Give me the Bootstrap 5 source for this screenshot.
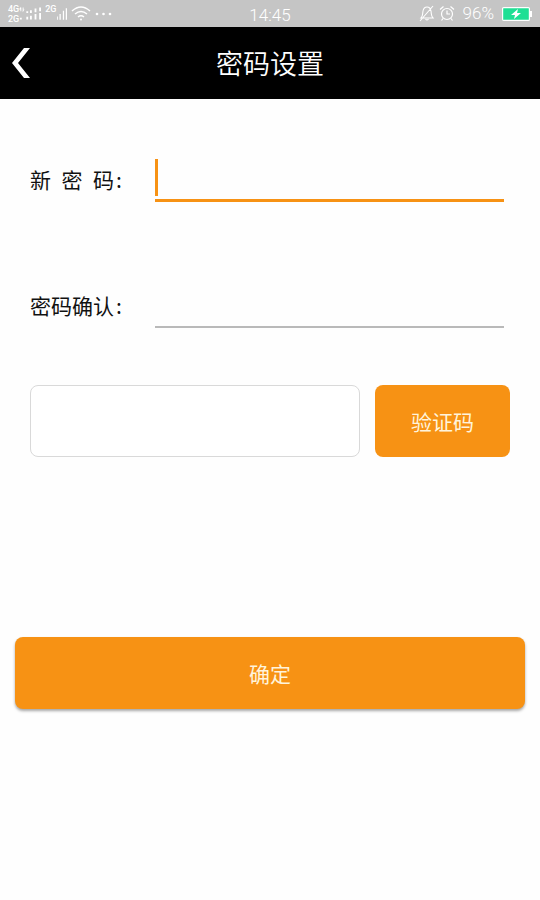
<!DOCTYPE html>
<html lang="zh-CN">
<head>
<meta charset="utf-8">
<meta name="viewport" content="width=device-width, initial-scale=1">
<title>密码设置</title>
<link rel="stylesheet" href="https://cdn.jsdelivr.net/npm/bootstrap@5.3.0/dist/css/bootstrap.min.css">
<style>
  :root { --brand: #f79214; }
  body { font-family: "Noto Sans CJK SC", sans-serif; font-size: 21px; line-height: 32px; background: #fefefe; color: #111; }
  .status-bar { background: #c5c5c5; height: 27px; font: 300 17px/27px Roboto, sans-serif; padding: 0 8px; color: #fff; }
  .status-side { flex: 1 1 0; height: 27px; }
  .sim-tag { font: 500 9px/10px Roboto, sans-serif; }
  .title-bar { background: #000; height: 72px; }
  .title-bar h1 { font-size: 27px; line-height: 40px; font-weight: 350; }
  .title-side { width: 48px; height: 72px; }
  .page-form { padding: 60px 30px 20px; }
  .field-label { width: 125px; gap: 2px; line-height: 40px; }
  .line-field { margin-right: 6px; height: 43px; border-bottom: 3px solid var(--brand); }
  .line-field input { height: 38px; outline: 0; caret-color: transparent; }
  .text-caret { width: 3px; height: 37px; background: var(--brand); }
  .line-field.idle { border-bottom: 2px solid #b9b9b9; }
  .second-row { margin-top: 83px; }
  .code-row { margin-top: 57px; gap: 15px; }
  .code-input { height: 72px; border: 1px solid #d9d9d9; border-radius: 8px; font-size: 21px; background: #fff; }
  .btn-brand { --bs-btn-color: #fff4dc; --bs-btn-bg: var(--brand); --bs-btn-hover-color: #fff; --bs-btn-hover-bg: #e98509; --bs-btn-active-color: #fff; --bs-btn-active-bg: #df7e05; --bs-btn-border-width: 0; --bs-btn-font-size: 21px; --bs-btn-line-height: 32px; --bs-btn-border-radius: 8px; height: 72px; }
  .code-btn { width: 135px; }
  .submit-row { margin: 180px -15px 0; }
  .btn.submit-btn { box-shadow: 0 2px 3px rgba(0,0,0,.35); }
</style>
</head>
<body>
<div class="status-bar d-flex align-items-center">
  <div class="status-side d-flex align-items-center">
    <div class="sim-tag"><div>4G</div><div>2G</div></div>
    <svg width="22" height="16" viewBox="0 0 24 16" fill="#fff" aria-hidden="true">
      <path d="M1.500 1h1v4h-1zM4 1h1v4H4zM0 3l2-3v3zM4 3h2L4 6z"/>
      <path d="M1 12h2v2H1zM8 11h2v3H8zM12 10h2v4h-2zM17 8h2v6h-2zM22 7h2v7h-2zM8 5h2v2H8zM12 4h2v3h-2zM17 2h2v4h-2zM22 1h2v4h-2z"/>
    </svg>
    <span class="sim-tag align-self-start pt-1 ms-1">2G</span>
    <svg width="10" height="16" viewBox="0 0 12 16" fill="#fff" aria-hidden="true"><path d="M0 11h1v4H0zM3 8h1.500v7H3zM7 4h1.500v11H7zM10.500 1H12v14h-1.500z"/></svg>
    <svg class="ms-1" width="20" height="17" viewBox="0 0 20 17" fill="none" stroke="#fff" stroke-width="1.500" aria-hidden="true">
      <path d="M1 6Q10-2 19 6M4 9q6-5 12 0M7 12q3-2.500 6 0"/><circle cx="10" cy="14.500" r="1" fill="#fff" stroke="none"/>
    </svg>
    <svg class="ms-1" width="17" height="4" viewBox="0 0 17 4" fill="#fff" aria-hidden="true"><circle cx="2" cy="2" r="1.300"/><circle cx="8.500" cy="2" r="1.300"/><circle cx="15" cy="2" r="1.300"/></svg>
  </div>
  <time class="pt-1">14:45</time>
  <div class="status-side d-flex align-items-center justify-content-end">
    <svg width="16" height="17" viewBox="0 0 16 17" fill="none" stroke="#fff" stroke-width="1.100" aria-hidden="true">
      <path d="M2 13c2-2 1.500-4 2-7 .5-2.500 2-4 4-4s3.500 1.500 4 4c.5 3 0 5 2 7zM6.500 14q1.500 2 3 0M14 1 1 16"/>
    </svg>
    <svg class="ms-1" width="16" height="17" viewBox="0 0 16 17" fill="none" stroke="#fff" stroke-width="1.200" aria-hidden="true">
      <circle cx="8" cy="9" r="5.500"/><path d="M8 5.500V9h3M1 4.500 4.500 1.500M15 4.500l-3.500-3M4 13.500l-1.500 2M12 13.500l1.500 2"/>
    </svg>
    <span class="ms-2">96%</span>
    <svg class="ms-2" width="30" height="14" viewBox="0 0 30 14" aria-hidden="true">
      <rect x=".6" y=".6" width="26.800" height="12.800" rx="1" fill="#1fdf94" stroke="#fff" stroke-width="1.200"/>
      <path d="M28 4h2v6h-2z" fill="#fff"/><path d="M16 2 9 8h4l-1 4 7-6h-4z" fill="#fff"/>
    </svg>
  </div>
</div>

<header class="title-bar d-flex align-items-center text-white">
  <button type="button" class="title-side btn border-0 rounded-0 p-0 text-start" aria-label="返回">
    <svg class="d-block ms-2" width="26" height="32" viewBox="0 0 26 32" fill="#fff" aria-hidden="true"><path d="M16 1h6L10 16l12 15h-6L4 16z"/></svg>
  </button>
  <h1 class="flex-fill text-center mb-0">密码设置</h1>
  <div class="title-side"></div>
</header>

<main>
  <form class="page-form">
    <div class="d-flex">
      <label class="field-label d-flex" for="newPassword"><span>新&ensp;密&ensp;码</span><span>:</span></label>
      <div class="line-field flex-fill d-flex">
        <span class="text-caret"></span>
        <input class="form-control border-0 rounded-0 shadow-none bg-transparent p-1" type="password" id="newPassword">
      </div>
    </div>
    <div class="second-row d-flex">
      <label class="field-label d-flex" for="confirmPassword"><span>密码确认</span><span>:</span></label>
      <div class="line-field idle flex-fill">
        <input class="form-control border-0 rounded-0 shadow-none bg-transparent p-1" type="password" id="confirmPassword">
      </div>
    </div>
    <div class="code-row d-flex">
      <input class="code-input form-control flex-fill" type="text" id="code" aria-label="验证码">
      <button type="button" class="code-btn btn btn-brand flex-shrink-0">验证码</button>
    </div>
    <div class="submit-row">
      <button type="submit" class="submit-btn btn btn-brand w-100">确定</button>
    </div>
  </form>
</main>
<script src="https://cdn.jsdelivr.net/npm/bootstrap@5.3.0/dist/js/bootstrap.bundle.min.js"></script>
</body>
</html>
